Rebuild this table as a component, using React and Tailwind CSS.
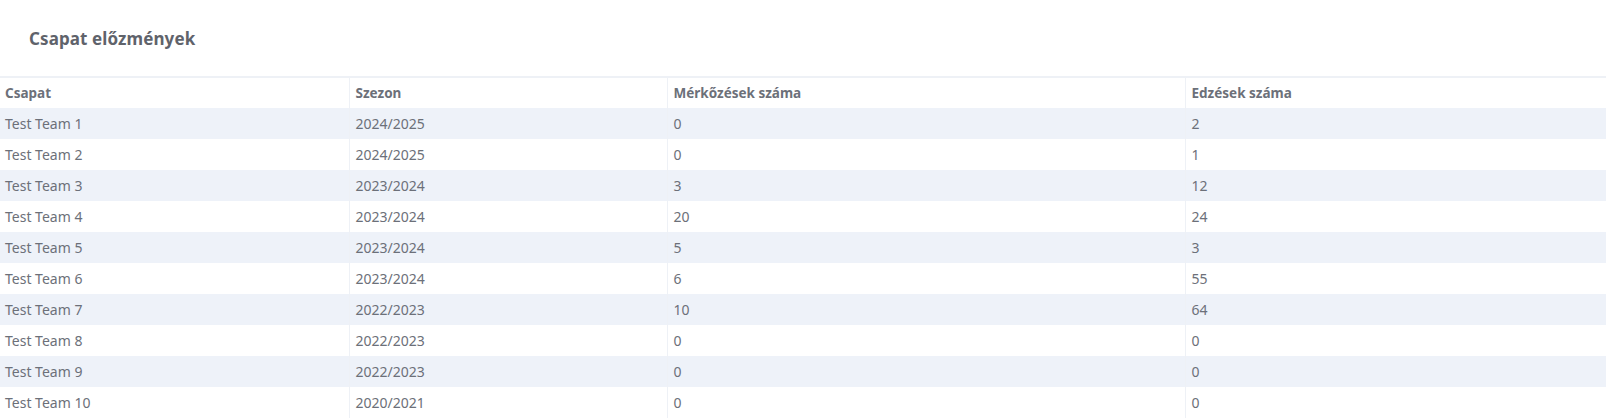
const rows = [
  { team: 'Test Team 1', season: '2024/2025', matches: 0, trainings: 2 },
  { team: 'Test Team 2', season: '2024/2025', matches: 0, trainings: 1 },
  { team: 'Test Team 3', season: '2023/2024', matches: 3, trainings: 12 },
  { team: 'Test Team 4', season: '2023/2024', matches: 20, trainings: 24 },
  { team: 'Test Team 5', season: '2023/2024', matches: 5, trainings: 3 },
  { team: 'Test Team 6', season: '2023/2024', matches: 6, trainings: 55 },
  { team: 'Test Team 7', season: '2022/2023', matches: 10, trainings: 64 },
  { team: 'Test Team 8', season: '2022/2023', matches: 0, trainings: 0 },
  { team: 'Test Team 9', season: '2022/2023', matches: 0, trainings: 0 },
  { team: 'Test Team 10', season: '2020/2021', matches: 0, trainings: 0 },
];

export default function App() {
  return (
    <div className="bg-white w-[1606px] h-[418px] overflow-hidden font-['Noto_Sans',sans-serif] text-[#6c7079]">
      <div className="h-[78px] flex items-center px-[29px] pt-[2px] border-b-2 border-[#eef1f6]">
        <h2 className="text-[17px] font-bold text-[#5f636b] tracking-[0.1px]">Csapat előzmények</h2>
      </div>
      <table className="w-full border-collapse text-[14px]">
        <colgroup>
          <col className="w-[349px]" />
          <col className="w-[318px]" />
          <col className="w-[518px]" />
          <col />
        </colgroup>
        <thead>
          <tr className="h-[30px] text-left">
            {['Csapat', 'Szezon', 'Mérkőzések száma', 'Edzések száma'].map((h, i) => (
              <th
                key={h}
                className={`font-bold text-[13.5px] px-[5px] ${i > 0 ? 'border-l border-[#eef1f6] pl-[6px]' : ''}`}
              >
                {h}
              </th>
            ))}
          </tr>
        </thead>
        <tbody>
          {rows.map((r, idx) => (
            <tr key={r.team} className={`h-[31px] ${idx % 2 === 0 ? 'bg-[#eef2f9]' : 'bg-white'}`}>
              <td className="px-[5px]">{r.team}</td>
              <td className="pl-[6px] border-l border-[#eef1f6]">{r.season}</td>
              <td className="pl-[6px] border-l border-[#eef1f6]">{r.matches}</td>
              <td className="pl-[6px] border-l border-[#eef1f6]">{r.trainings}</td>
            </tr>
          ))}
        </tbody>
      </table>
    </div>
  );
}
